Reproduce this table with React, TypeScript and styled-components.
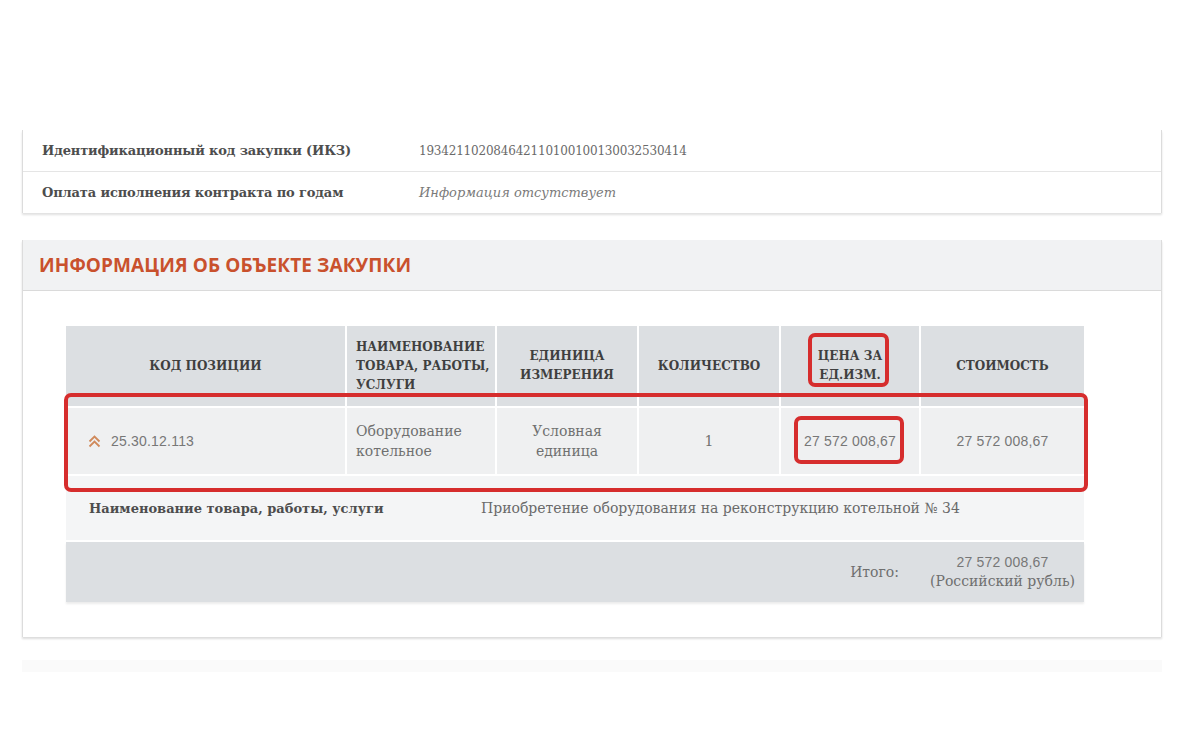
import styled, { createGlobalStyle } from "styled-components";

const GlobalStyle = createGlobalStyle`
  body {
    margin: 0;
    background: #ffffff;
    font-family: "DejaVu Serif", "Liberation Serif", serif;
  }
`;

const Page = styled.div`
  padding: 130px 38px 0 22px;
  display: flex;
  flex-direction: column;
  gap: 27px;
`;

const InfoCard = styled.div`
  border-left: 1px solid #dcdcdc;
  border-right: 1px solid #dcdcdc;
  box-shadow: 0 2px 2px rgba(0, 0, 0, 0.12);
  background: #fff;
`;

const InfoRow = styled.div<{ $last?: boolean }>`
  display: grid;
  grid-template-columns: 377px 1fr;
  align-items: center;
  height: 41px;
  padding-left: 19px;
  border-bottom: ${(p) => (p.$last ? "none" : "1px solid #e5e5e5")};
`;

const InfoLabel = styled.div`
  font-size: 13px;
  font-weight: 700;
  color: #4d4d4d;
  letter-spacing: -0.15px;
`;

const InfoValue = styled.div<{ $muted?: boolean }>`
  font-size: ${(p) => (p.$muted ? "13px" : "12px")};
  color: ${(p) => (p.$muted ? "#7a7a7a" : "#6a6a6a")};
  font-style: ${(p) => (p.$muted ? "italic" : "normal")};
  letter-spacing: ${(p) => (p.$muted ? "0" : "-0.2px")};
`;

const SectionCard = styled.div`
  border-left: 1px solid #dcdcdc;
  border-right: 1px solid #dcdcdc;
  box-shadow: 0 2px 2px rgba(0, 0, 0, 0.14);
  background: #fff;
`;

const SectionHeader = styled.div`
  height: 50px;
  background: #f1f2f3;
  border-bottom: 1px solid #dadada;
  display: flex;
  align-items: center;
  padding-left: 16px;
`;

const SectionTitle = styled.h2`
  margin: 0;
  font-family: "Open Sans", "Noto Sans", sans-serif;
  font-size: 19px;
  font-weight: 700;
  color: #c9512d;
  letter-spacing: 0.1px;
`;

const SectionBody = styled.div`
  padding: 35px 79px 35px 43px;
`;

const TableWrap = styled.div`
  position: relative;
`;

const Grid = styled.div`
  display: grid;
  grid-template-columns: 279px 148px 140px 140px 138px 163px;
  gap: 2px;
`;

const HeadCell = styled.div<{ $align?: "left" | "center" }>`
  height: 80px;
  background: #dcdfe2;
  display: flex;
  align-items: center;
  justify-content: ${(p) => (p.$align === "left" ? "flex-start" : "center")};
  text-align: ${(p) => p.$align ?? "center"};
  padding: ${(p) => (p.$align === "left" ? "0 4px 0 9px" : "0 4px")};
  box-sizing: border-box;
  font-size: 12px;
  font-weight: 700;
  line-height: 19px;
  text-transform: uppercase;
  white-space: nowrap;
  color: #3f3f3f;
  overflow: hidden;
`;

const DataCell = styled.div<{ $align?: "left" | "center" }>`
  height: 66px;
  background: #eff0f1;
  display: flex;
  align-items: center;
  gap: 10px;
  justify-content: ${(p) => (p.$align === "left" ? "flex-start" : "center")};
  text-align: ${(p) => p.$align ?? "center"};
  padding: 0 9px;
  box-sizing: border-box;
  font-size: 14px;
  line-height: 20px;
  color: #707070;
`;

const CodeCell = styled(DataCell)`
  padding-left: 22px;
`;

const Number = styled.span`
  font-family: "Liberation Sans", "Roboto", sans-serif;
  font-size: 14px;
  color: #777;
  letter-spacing: 0.2px;
`;

const NameRow = styled.div`
  grid-column: 1 / -1;
  height: 64px;
  background: #f4f5f6;
  display: grid;
  grid-template-columns: 392px 1fr;
  align-items: center;
  padding-left: 23px;
`;

const NameLabel = styled.div`
  font-size: 13px;
  font-weight: 700;
  color: #4d4d4d;
`;

const NameValue = styled.div`
  font-size: 14px;
  color: #6a6a6a;
`;

const TotalRow = styled.div`
  grid-column: 1 / -1;
  height: 60px;
  background: #dcdfe2;
  display: flex;
  align-items: center;
  justify-content: flex-end;
  box-shadow: 0 2px 2px rgba(0, 0, 0, 0.08);
`;

const TotalLabel = styled.div`
  font-size: 14px;
  color: #6f6f6f;
  margin-right: 22px;
`;

const TotalValue = styled.div`
  width: 163px;
  text-align: center;
  font-size: 14px;
  line-height: 19px;
  color: #6f6f6f;
`;

const Highlight = styled.div<{ $x: number; $y: number; $w: number; $h: number }>`
  position: absolute;
  left: ${(p) => p.$x}px;
  top: ${(p) => p.$y}px;
  width: ${(p) => p.$w}px;
  height: ${(p) => p.$h}px;
  box-sizing: border-box;
  border: 4px solid #d62d2d;
  border-radius: 7px;
  pointer-events: none;
`;

const FadeStrip = styled.div`
  margin-top: -4px;
  height: 12px;
  background: #fafafa;
`;

function ChevronsUp() {
  return (
    <svg width="13" height="13" viewBox="0 0 13 13" fill="none" stroke="#d08a5c" strokeWidth="1.8">
      <polyline points="1.5,6.5 6.5,1.5 11.5,6.5" />
      <polyline points="1.5,11.5 6.5,6.5 11.5,11.5" />
    </svg>
  );
}

export default function App() {
  return (
    <>
      <GlobalStyle />
      <Page>
        <InfoCard>
          <InfoRow>
            <InfoLabel>Идентификационный код закупки (ИКЗ)</InfoLabel>
            <InfoValue>193421102084642110100100130032530414</InfoValue>
          </InfoRow>
          <InfoRow $last>
            <InfoLabel>Оплата исполнения контракта по годам</InfoLabel>
            <InfoValue $muted>Информация отсутствует</InfoValue>
          </InfoRow>
        </InfoCard>

        <SectionCard>
          <SectionHeader>
            <SectionTitle>ИНФОРМАЦИЯ ОБ ОБЪЕКТЕ ЗАКУПКИ</SectionTitle>
          </SectionHeader>
          <SectionBody>
            <TableWrap>
              <Grid>
                <HeadCell>Код позиции</HeadCell>
                <HeadCell $align="left">
                  Наименование
                  <br />
                  товара, работы,
                  <br />
                  услуги
                </HeadCell>
                <HeadCell>
                  Единица
                  <br />
                  измерения
                </HeadCell>
                <HeadCell>Количество</HeadCell>
                <HeadCell>
                  Цена за
                  <br />
                  ед.изм.
                </HeadCell>
                <HeadCell>Стоимость</HeadCell>

                <CodeCell $align="left">
                  <ChevronsUp />
                  <Number>25.30.12.113</Number>
                </CodeCell>
                <DataCell $align="left">Оборудование котельное</DataCell>
                <DataCell>Условная единица</DataCell>
                <DataCell>1</DataCell>
                <DataCell>
                  <Number>27 572 008,67</Number>
                </DataCell>
                <DataCell>
                  <Number>27 572 008,67</Number>
                </DataCell>

                <NameRow>
                  <NameLabel>Наименование товара, работы, услуги</NameLabel>
                  <NameValue>Приобретение оборудования на реконструкцию котельной № 34</NameValue>
                </NameRow>

                <TotalRow>
                  <TotalLabel>Итого:</TotalLabel>
                  <TotalValue>
                    <Number>27 572 008,67</Number>
                    <br />
                    (Российский рубль)
                  </TotalValue>
                </TotalRow>
              </Grid>

              <Highlight $x={-2} $y={67} $w={1024} $h={99} />
              <Highlight $x={742} $y={7} $w={81} $h={54} />
              <Highlight $x={728} $y={90} $w={110} $h={48} />
            </TableWrap>
          </SectionBody>
        </SectionCard>

        <FadeStrip />
      </Page>
    </>
  );
}
